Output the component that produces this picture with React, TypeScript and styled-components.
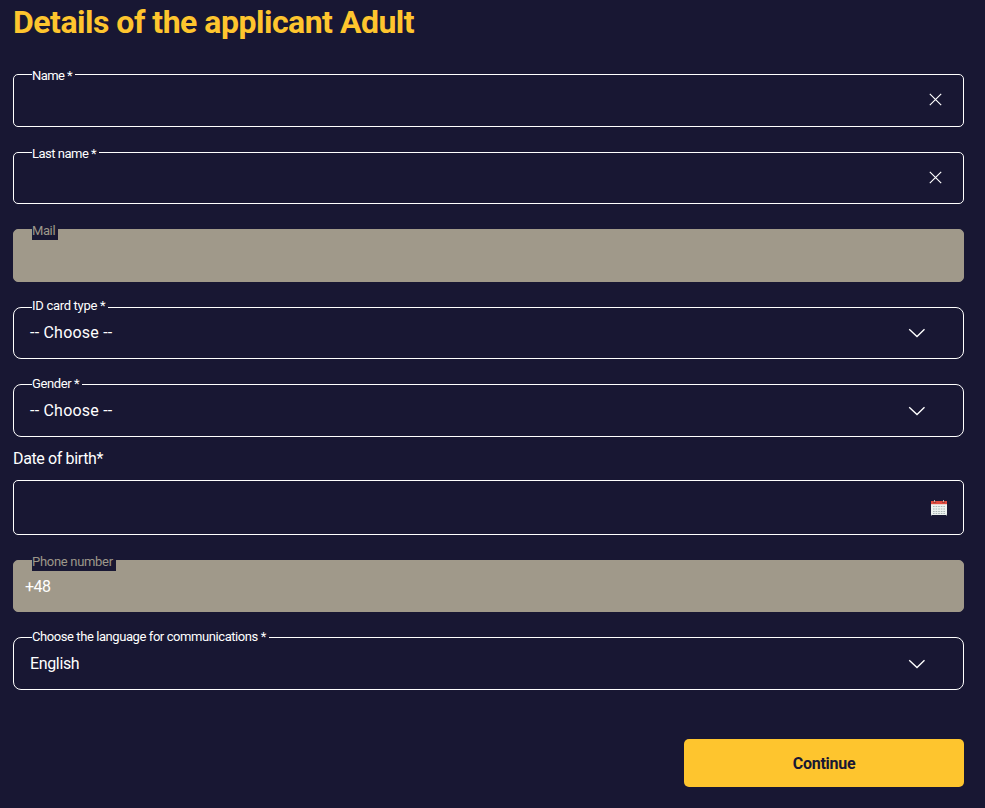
import React from 'react';
import styled, { createGlobalStyle } from 'styled-components';

const NAVY = '#181733';
const YELLOW = '#fec52e';
const TAUPE = '#a0998a';

const GlobalStyle = createGlobalStyle`
  *, *::before, *::after { box-sizing: border-box; }
  body {
    margin: 0;
    min-height: 100vh;
    background: ${NAVY};
    color: #fff;
    font-family: Roboto, sans-serif;
    overflow: hidden;
  }
`;

const Form = styled.form`
  display: flex;
  flex-direction: column;
  width: 951px;
  margin-left: 13px;
`;

const Title = styled.h1`
  margin: 0 0 30px;
  height: 44px;
  color: ${YELLOW};
  font-size: 32px;
  line-height: 44px;
  font-weight: 700;
  letter-spacing: -0.5px;
  white-space: nowrap;
`;

const Fields = styled.div`
  display: flex;
  flex-direction: column;
  gap: 25px;
`;

const Box = styled.div<{ $kind: 'input' | 'select' | 'disabled' }>`
  position: relative;
  display: flex;
  align-items: center;
  justify-content: space-between;
  height: 52.5px;
  padding: ${({ $kind }) =>
    $kind === 'input' ? '0 21px 1px 16px' : $kind === 'select' ? '1px 38px 0 16px' : '2px 16px 0 11px'};
  border: 1px solid ${({ $kind }) => ($kind === 'disabled' ? TAUPE : '#fff')};
  border-radius: ${({ $kind }) => ($kind === 'select' ? '8px' : '5px')};
  background: ${({ $kind }) => ($kind === 'disabled' ? TAUPE : 'transparent')};
`;

const FloatingLabel = styled.label<{ $muted?: boolean; $raised?: boolean; $tracking: number }>`
  position: absolute;
  left: 18px;
  top: ${({ $raised }) => ($raised ? '-10.5px' : '-8px')};
  height: 18px;
  padding-right: 3px;
  background: ${NAVY};
  color: ${({ $muted }) => ($muted ? '#9d978a' : '#fff')};
  font-size: 13px;
  line-height: ${({ $muted }) => ($muted ? '17px' : '18px')};
  letter-spacing: ${({ $tracking }) => $tracking}px;
  white-space: nowrap;
`;

const Value = styled.span<{ $tracking: number }>`
  font-size: 16px;
  line-height: 20px;
  letter-spacing: ${({ $tracking }) => $tracking}px;
`;

const DateGroup = styled.div`
  display: flex;
  flex-direction: column;
  gap: 11px;
  margin-top: -13px;
`;

const DateLabel = styled.label`
  height: 20px;
  font-size: 16px;
  line-height: 20px;
  letter-spacing: -0.37px;
`;

const DateBox = styled.div`
  display: flex;
  align-items: center;
  justify-content: flex-end;
  height: 55px;
  padding-right: 16px;
  border: 1px solid #fff;
  border-radius: 5px;
`;

const Actions = styled.div`
  display: flex;
  justify-content: flex-end;
  margin-top: 49px;
`;

const ContinueButton = styled.button`
  width: 280px;
  height: 48px;
  padding: 1px 0 0;
  border: 0;
  border-radius: 5px;
  background: ${YELLOW};
  color: ${NAVY};
  font: 700 16px/47px Roboto, sans-serif;
  letter-spacing: -0.25px;
`;

const Icon = styled.svg`
  display: block;
  flex: none;
  margin-left: auto;
`;

const ClearIcon = () => (
  <Icon width="13" height="13" viewBox="0 0 13 13" fill="none" stroke="#fff" strokeWidth="1.15">
    <path d="M.8.8 12.2 12.2M12.2.8.8 12.2" />
  </Icon>
);

const ChevronIcon = () => (
  <Icon width="17" height="10" viewBox="0 0 17 10" fill="none" stroke="#fff" strokeWidth="1.35">
    <path d="M1.2 1.2 9 8.5 16.5 1.2" />
  </Icon>
);

const CalendarIcon = () => (
  <Icon width="16" height="17" viewBox="0 0 16 17">
    <path d="M0 4h16v12H0z" fill="#edf2ef" />
    <path d="M0 2h16v3.2H0z" fill="#e04b3f" />
    <path d="M2.2 2.8h3v1.3h-3zM11 2.8h3v1.3h-3z" fill="#a83a33" />
    <path d="M3 1h1v2H3zM12 1h1v2h-1z" fill="#b9b2aa" />
    <path
      d="M2 7.5h12M2 10h12M2 12.5h12M2 14.5h12"
      stroke="#aab6b6"
      strokeWidth="1.1"
      strokeDasharray="1.6 1"
    />
    <path d="M0 16h1M15 16h1" stroke="#c5cdca" />
  </Icon>
);

interface FieldProps {
  label: string;
  tracking: number;
}

const TextField = ({ label, tracking }: FieldProps) => (
  <Box $kind="input">
    <FloatingLabel $tracking={tracking}>{label}</FloatingLabel>
    <ClearIcon />
  </Box>
);

const SelectField = ({ label, tracking, value, valueTracking }: FieldProps & { value: string; valueTracking: number }) => (
  <Box $kind="select">
    <FloatingLabel $raised $tracking={tracking}>{label}</FloatingLabel>
    <Value $tracking={valueTracking}>{value}</Value>
    <ChevronIcon />
  </Box>
);

const DisabledField = ({ label, tracking, value }: FieldProps & { value?: string }) => (
  <Box $kind="disabled">
    <FloatingLabel $muted $tracking={tracking}>{label}</FloatingLabel>
    {value && <Value $tracking={-0.5}>{value}</Value>}
  </Box>
);

export default function App() {
  return (
    <>
      <GlobalStyle />
      <Form>
        <Title>Details of the applicant Adult</Title>
        <Fields>
          <TextField label="Name *" tracking={-0.55} />
          <TextField label="Last name *" tracking={-0.5} />
          <DisabledField label="Mail" tracking={-0.4} />
          <SelectField label="ID card type *" tracking={-0.3} value="-- Choose --" valueTracking={0.22} />
          <SelectField label="Gender *" tracking={-0.4} value="-- Choose --" valueTracking={0.22} />
          <DateGroup>
            <DateLabel>Date of birth*</DateLabel>
            <DateBox><CalendarIcon /></DateBox>
          </DateGroup>
          <DisabledField label="Phone number" tracking={-0.3} value="+48" />
          <SelectField
            label="Choose the language for communications *"
            tracking={-0.42}
            value="English"
            valueTracking={-0.35}
          />
        </Fields>
        <Actions>
          <ContinueButton type="button">Continue</ContinueButton>
        </Actions>
      </Form>
    </>
  );
}
